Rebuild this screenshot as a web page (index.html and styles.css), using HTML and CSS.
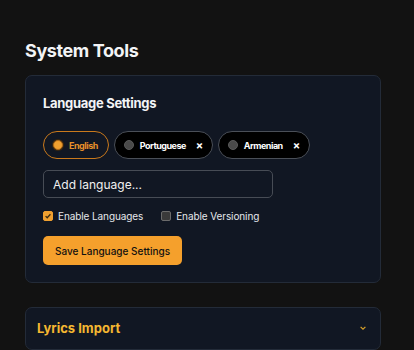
FILE: index.html
```html
<!DOCTYPE html>
<html lang="en">
<head>
  <meta charset="UTF-8">
  <meta name="viewport" content="width=device-width, initial-scale=1.0">
  <title>System Tools</title>
  <link rel="stylesheet" href="styles.css">
</head>
<body>
  <main class="page">
    <h1 class="page-title">System Tools</h1>

    <section class="card">
      <h2 class="card-title">Language Settings</h2>

      <div class="chips">
        <div class="chip active">
          <span class="radio"></span>
          <span class="chip-label">English</span>
        </div>
        <div class="chip">
          <span class="radio"></span>
          <span class="chip-label">Portuguese</span>
          <span class="chip-remove">&times;</span>
        </div>
        <div class="chip">
          <span class="radio"></span>
          <span class="chip-label">Armenian</span>
          <span class="chip-remove">&times;</span>
        </div>
      </div>

      <input class="lang-input" type="text" placeholder="Add language...">

      <div class="options">
        <label class="option">
          <span class="box checked">
            <svg viewBox="0 0 10 10" width="8" height="8"><path d="M2 5.2 L4 7.2 L8 2.8" fill="none" stroke="#3a2a10" stroke-width="1.6"/></svg>
          </span>
          Enable Languages
        </label>
        <label class="option">
          <span class="box"></span>
          Enable Versioning
        </label>
      </div>

      <button class="save-btn">Save Language Settings</button>
    </section>

    <section class="card collapsed">
      <h2 class="collapse-title">Lyrics Import</h2>
      <svg class="chevron" viewBox="0 0 10 10" width="8" height="8"><path d="M2 3.5 L5 6.5 L8 3.5" fill="none" stroke="#d9a22a" stroke-width="1.5"/></svg>
    </section>
  </main>
</body>
</html>
```

FILE: styles.css
```css
body {
  margin: 0;
  background-color: #121212;
  color: #f3f4f6;
  font-family: Inter, "Noto Sans", sans-serif;
}

.page {
  width: 356px;
  padding: 39px 0 0 25px;
}

.page-title {
  margin: 0 0 12px;
  font-size: 18px;
  line-height: 24px;
  font-weight: 700;
  letter-spacing: -0.4px;
}

.card {
  background-color: #111723;
  border: 1px solid #232b38;
  border-radius: 7px;
  padding: 18px 17px 17px;
}

.card-title {
  margin: 0 0 19px;
  font-size: 13px;
  line-height: 18px;
  font-weight: 700;
  letter-spacing: -0.3px;
}

.chips {
  display: flex;
  gap: 5px;
  margin-bottom: 11px;
}

.chip {
  display: flex;
  align-items: center;
  height: 26px;
  padding: 0 9px;
  background-color: #000;
  border: 1px solid #4a4f58;
  border-radius: 14px;
  font-size: 9px;
  font-weight: 700;
  letter-spacing: -0.5px;
  color: #fff;
}

.chip.active {
  background-color: transparent;
  border-color: #c9791c;
  color: #e8902a;
  padding-right: 10px;
}

.radio {
  width: 8px;
  height: 8px;
  border-radius: 50%;
  background-color: #4a4a4a;
  border: 1px solid #5a5a5a;
  margin-right: 6px;
}

.chip.active .radio {
  background-color: #f0a030;
  border-color: #b06a18;
  box-shadow: 0 0 0 1px #3a2710;
}

.chip-remove {
  margin-left: 10px;
  font-size: 11px;
  line-height: 1;
}

.lang-input {
  display: block;
  box-sizing: border-box;
  width: 230px;
  height: 28px;
  padding: 0 9px;
  background-color: #111723;
  border: 1px solid #474c55;
  border-radius: 5px;
  color: #fff;
  font-family: inherit;
  font-size: 12px;
  margin-bottom: 11px;
}

.lang-input::placeholder {
  color: #f0f0f0;
}

.options {
  display: flex;
  gap: 18px;
  height: 14px;
  align-items: center;
  margin-bottom: 13px;
}

.option {
  display: flex;
  align-items: center;
  gap: 5px;
  font-size: 10px;
  letter-spacing: -0.1px;
  color: #e5e7eb;
}

.box {
  display: flex;
  align-items: center;
  justify-content: center;
  box-sizing: border-box;
  width: 10px;
  height: 10px;
  border: 1px solid #6b6b6b;
  background-color: #3a3a3a;
  border-radius: 2px;
}

.box.checked {
  background-color: #f0a030;
  border-color: #f0a030;
}

.save-btn {
  display: block;
  height: 29px;
  padding: 0 12px;
  background-color: #f5a02c;
  border: none;
  border-radius: 5px;
  color: #111;
  font-family: inherit;
  font-size: 10px;
  font-weight: 500;
}

.card.collapsed {
  margin-top: 24px;
  padding: 11px 13px 12px 11px;
  display: flex;
  align-items: center;
  justify-content: space-between;
}

.collapse-title {
  margin: 0;
  font-size: 13px;
  line-height: 18px;
  font-weight: 700;
  color: #f5b731;
}
```
